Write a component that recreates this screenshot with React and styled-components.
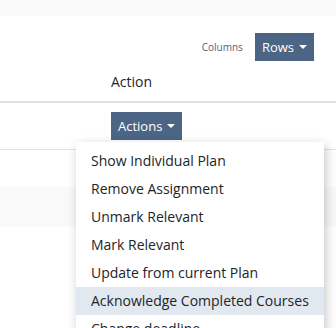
import React from "react";
import styled, { createGlobalStyle } from "styled-components";

const GlobalStyle = createGlobalStyle`
  html, body {
    margin: 0;
    padding: 0;
    background: #fff;
    font-family: "Open Sans", "Liberation Sans", sans-serif;
    color: #212529;
  }
`;

const Page = styled.div`
  width: 336px;
  height: 328px;
  overflow: hidden;
  position: relative;
`;

const TopBand = styled.div`
  height: 16px;
  background: #f9f9f9;
`;

const Toolbar = styled.div`
  display: flex;
  justify-content: flex-end;
  align-items: center;
  gap: 12px;
  padding: 17px 22px 0 0;
  height: 28px;
`;

const LinkButton = styled.span`
  font-size: 10px;
  color: #4d6585;
`;

const Button = styled.button`
  display: inline-flex;
  align-items: center;
  gap: 5px;
  height: 28px;
  padding: 0 7px 0 7px;
  border: none;
  border-radius: 0;
  background: #4d6585;
  color: #fff;
  font-family: inherit;
  font-size: 13px;
  cursor: pointer;
`;

const Caret = styled.span`
  width: 0;
  height: 0;
  border-left: 4px solid transparent;
  border-right: 4px solid transparent;
  border-top: 4px solid #fff;
`;

const Table = styled.div`
  display: flex;
  flex-direction: column;
`;

const HeadRow = styled.div`
  display: flex;
  align-items: center;
  height: 40px;
  border-bottom: 2px solid #dee2e6;
  font-size: 14px;
`;

const Row = styled.div`
  display: flex;
  align-items: center;
  height: ${(p) => p.h}px;
  background: ${(p) => (p.striped ? "#f9f9f9" : "#fff")};
  border-bottom: ${(p) => (p.bordered ? "1px solid #dee2e6" : "none")};
`;

const Cell = styled.div`
  padding-left: 111px;
`;

const Dropdown = styled.div`
  position: relative;
  display: inline-block;
`;

const Menu = styled.ul`
  position: absolute;
  top: 30px;
  left: -35px;
  margin: 0;
  padding: 5px 0;
  width: 248px;
  list-style: none;
  background: #fff;
  box-shadow: 2px 3px 10px rgba(0, 0, 0, 0.22);
  z-index: 10;
`;

const Item = styled.li`
  height: 28px;
  line-height: 28px;
  padding: 0 15px;
  font-size: 14px;
  color: #212529;
  white-space: nowrap;
  background: ${(p) => (p.active ? "#e2e8f0" : "transparent")};
`;

const items = [
  "Show Individual Plan",
  "Remove Assignment",
  "Unmark Relevant",
  "Mark Relevant",
  "Update from current Plan",
  "Acknowledge Completed Courses",
  "Change deadline",
];

export default function App() {
  return (
    <Page>
      <GlobalStyle />
      <TopBand />
      <Toolbar>
        <LinkButton>Columns</LinkButton>
        <Button>
          Rows <Caret />
        </Button>
      </Toolbar>
      <Table>
        <HeadRow>
          <Cell>Action</Cell>
        </HeadRow>
        <Row h={46} bordered>
          <Cell>
            <Dropdown>
              <Button>
                Actions <Caret />
              </Button>
              <Menu>
                {items.map((t, i) => (
                  <Item key={t} active={i === 5}>
                    {t}
                  </Item>
                ))}
              </Menu>
            </Dropdown>
          </Cell>
        </Row>
        <Row h={37} />
        <Row h={40} striped />
      </Table>
    </Page>
  );
}
